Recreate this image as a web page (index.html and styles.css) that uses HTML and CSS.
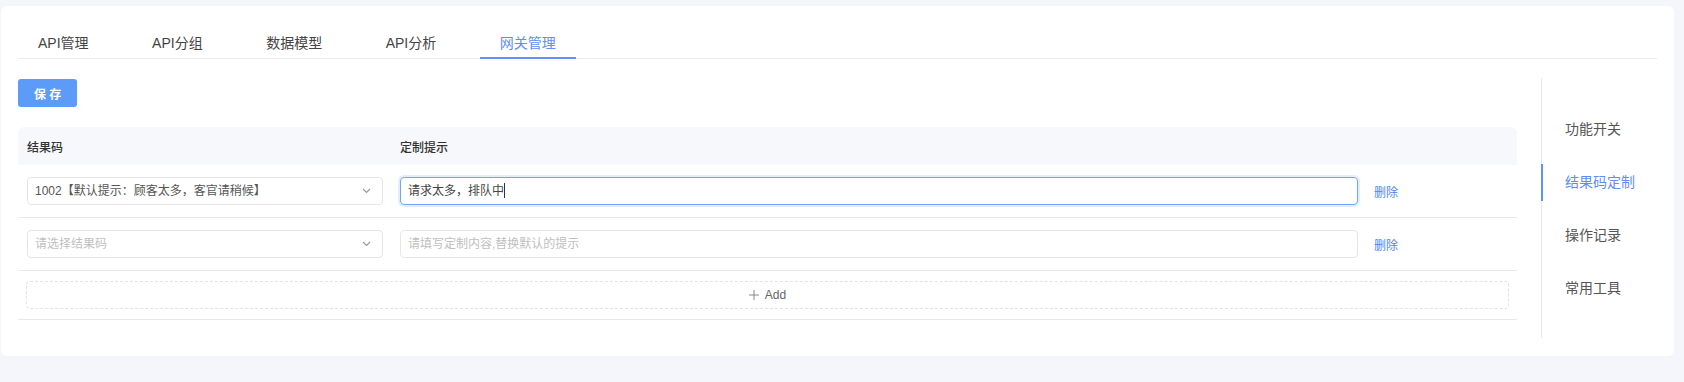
FILE: index.html
```html
<!DOCTYPE html>
<html lang="zh-CN">
<head>
    <meta charset="UTF-8">
    <meta name="viewport" content="width=device-width, initial-scale=1.0">
    <title>网关管理</title>
    <link rel="stylesheet" href="styles.css">
</head>
<body>
    <div class="card">
        <!-- 顶部标签 -->
        <div class="tabs">
            <div class="tab">API管理</div>
            <div class="tab">API分组</div>
            <div class="tab">数据模型</div>
            <div class="tab">API分析</div>
            <div class="tab active">网关管理</div>
        </div>

        <div class="layout">
            <div class="main">
                <button class="btn-save">保 存</button>

                <div class="table">
                    <div class="row head">
                        <div>结果码</div>
                        <div>定制提示</div>
                        <div></div>
                    </div>
                    <div class="row">
                        <div class="select">
                            <span>1002【默认提示：顾客太多，客官请稍候】</span>
                            <svg class="arrow" width="9" height="6" viewBox="0 0 9 6"><path d="M1 1l3.5 3.5L8 1" fill="none" stroke="#999" stroke-width="1.1"/></svg>
                        </div>
                        <div class="input focused">请求太多，排队中<span class="caret"></span></div>
                        <a class="link">删除</a>
                    </div>
                    <div class="row">
                        <div class="select">
                            <span class="placeholder">请选择结果码</span>
                            <svg class="arrow" width="9" height="6" viewBox="0 0 9 6"><path d="M1 1l3.5 3.5L8 1" fill="none" stroke="#999" stroke-width="1.1"/></svg>
                        </div>
                        <div class="input"><span class="placeholder">请填写定制内容,替换默认的提示</span></div>
                        <a class="link">删除</a>
                    </div>
                    <div class="row add-row">
                        <div class="btn-add">
                            <svg width="10" height="10" viewBox="0 0 10 10"><path d="M5 0v10M0 5h10" stroke="#888" stroke-width="1"/></svg>
                            <span>Add</span>
                        </div>
                    </div>
                </div>
            </div>

            <!-- 右侧导航 -->
            <nav class="side">
                <div class="side-item">功能开关</div>
                <div class="side-item active">结果码定制</div>
                <div class="side-item">操作记录</div>
                <div class="side-item">常用工具</div>
            </nav>
        </div>
    </div>
</body>
</html>
```

FILE: styles.css
```css
body {
    margin: 0;
    padding: 6px 10px 0 1px;
    background-color: #f4f6fb;
    font-family: "Liberation Sans", "Noto Sans CJK SC", sans-serif;
    color: #333;
}
.card {
    background: #fff;
    border-radius: 6px;
    padding: 24px 17px 18px;
}
.tabs {
    display: flex;
    gap: 23.5px;
    border-bottom: 1px solid #ebebeb;
}
.tab {
    padding: 0 20px;
    font-size: 14px;
    line-height: 27px;
    color: #444;
    border-bottom: 2px solid transparent;
    margin-bottom: -1px;
}
.tab.active {
    color: #5b8ff5;
    border-bottom-color: #5b95f6;
}
.layout {
    display: flex;
    margin-top: 19px;
}
.main {
    width: 1499px;
    padding-top: 1px;
}
.btn-save {
    display: block;
    height: 28px;
    padding: 0 16px;
    border: none;
    border-radius: 3px;
    background-color: #5c9cf8;
    color: #fff;
    font-family: inherit;
    font-size: 12px;
    font-weight: bold;
}
.table {
    margin-top: 20px;
}
.row {
    display: grid;
    grid-template-columns: 356px 958px auto;
    column-gap: 17px;
    align-items: center;
    padding: 12px 9px;
    border-bottom: 1px solid #e8e8e8;
    font-size: 12px;
}
.row.head {
    height: 38px;
    box-sizing: border-box;
    padding: 0 9px;
    background-color: #f6f8fb;
    border-radius: 6px 6px 0 0;
    border-bottom: none;
    font-weight: 500;
    color: #333;
}
.select, .input {
    height: 28px;
    box-sizing: border-box;
    border: 1px solid #e6e6e6;
    border-radius: 4px;
    padding: 0 7px;
    line-height: 26px;
    color: #555;
    white-space: nowrap;
}
.select {
    display: flex;
    justify-content: space-between;
    align-items: center;
    padding-right: 11px;
}
.input.focused {
    border-color: #73a6f7;
    box-shadow: 0 0 0 2px rgba(92, 156, 248, 0.18);
    color: #444;
}
.caret {
    display: inline-block;
    width: 1px;
    height: 15px;
    background: #333;
    vertical-align: middle;
    margin-top: -2px;
}
.placeholder {
    color: #c0c0c0;
}
.link {
    color: #4a87f3;
    margin-left: -1px;
}
.add-row {
    display: block;
    padding: 10px 8px;
}
.btn-add {
    height: 28px;
    box-sizing: border-box;
    border: 1px dashed #e2e2e2;
    border-radius: 4px;
    display: flex;
    justify-content: center;
    align-items: center;
    gap: 6px;
    color: #666;
    font-size: 12px;
}
.side {
    flex: 1;
    margin-left: 24px;
    border-left: 1px solid #e8e8e8;
    padding: 33px 0 31px;
    display: flex;
    flex-direction: column;
    gap: 16px;
}
.side-item {
    line-height: 37px;
    padding-left: 23px;
    font-size: 14px;
    color: #555;
}
.side-item.active {
    color: #5b8ff5;
    margin-left: -1px;
    border-left: 2px solid #5b95f6;
    padding-left: 22px;
}
```
